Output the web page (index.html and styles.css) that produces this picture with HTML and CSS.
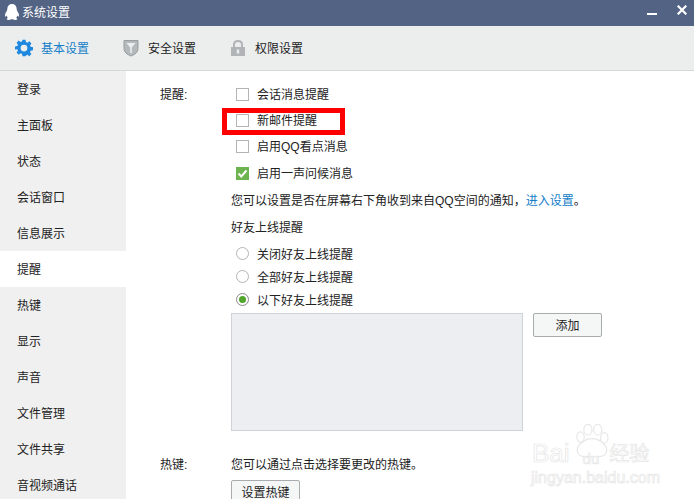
FILE: index.html
```html
<!DOCTYPE html>
<html lang="zh">
<head>
<meta charset="utf-8">
<title>系统设置</title>
<link rel="stylesheet" href="styles.css">
</head>
<body>
<div class="window">
  <header class="titlebar">
    <svg class="qq" width="16" height="18" viewBox="0 0 16 18"><path d="M8 1C5 1 3.400 3 3.300 6C3.300 7 3 7.800 2.500 8.600C1.500 10 .8 11.600 1 13C1.200 14 1.800 13.800 2.600 12.600C2.800 13.600 3.200 14.400 3.900 15C2.900 15.400 2.400 16 2.900 16.600C3.600 17.300 6 17.200 7.300 16.300H8.700C10 17.200 12.400 17.300 13.100 16.600C13.600 16 13.100 15.400 12.100 15C12.800 14.400 13.200 13.600 13.400 12.600C14.200 13.800 14.800 14 15 13C15.200 11.600 14.500 10 13.500 8.600C13 7.800 12.700 7 12.700 6C12.600 3 11 1 8 1Z" fill="#fff"/></svg>
    <span class="title">系统设置</span>
    <span class="min"></span>
    <svg class="close" width="10" height="10" viewBox="0 0 10 10"><path d="M.7 .7L9.300 9.300M9.300 .7L.7 9.300" stroke="#fff" stroke-width="2.200"/></svg>
  </header>
  <nav class="toolbar">
    <a class="tab active">
      <svg width="18" height="18" viewBox="0 0 24 24"><path fill="#1e88e0" fill-rule="evenodd" d="M10 1h4l.6 3.100 1.900.8 2.600-1.800 2.800 2.800-1.800 2.600.8 1.900 3.100.6v4l-3.100.6-.8 1.900 1.800 2.600-2.800 2.800-2.600-1.800-1.900.8L14 23h-4l-.6-3.100-1.900-.8-2.600 1.800-2.800-2.800 1.800-2.600-.8-1.900L0 14v-4l3.100-.6.800-1.900-1.800-2.600 2.800-2.800 2.600 1.800 1.900-.8zM12 7.500a4.500 4.500 0 1 0 0 9 4.500 4.500 0 0 0 0-9z"/></svg>
      基本设置
    </a>
    <a class="tab">
      <svg width="16" height="18" viewBox="0 0 16 18"><path d="M1 1.500H15V9.500C15 13 12 15.600 8 17C4 15.600 1 13 1 9.500Z" fill="#b4b9bb" stroke="#989d9f"/><path d="M3.500 4H12.500L8.800 8.500V14H7.200V8.500Z" fill="#eceeee"/></svg>
      安全设置
    </a>
    <a class="tab">
      <svg width="16" height="18" viewBox="0 0 16 18"><path d="M4 8V5.500C4 3.200 5.700 2 8 2S12 3.200 12 5.500V8" fill="none" stroke="#b0b4b6" stroke-width="2"/><path d="M1 8H15V17H1Z" fill="#b0b4b6"/><path d="M6.800 10.500H9.200V14.500H6.800Z" fill="#eceeee"/></svg>
      权限设置
    </a>
  </nav>
  <div class="body">
    <aside class="sidebar">
      <div class="item">登录</div>
      <div class="item">主面板</div>
      <div class="item">状态</div>
      <div class="item">会话窗口</div>
      <div class="item">信息展示</div>
      <div class="item current">提醒</div>
      <div class="item">热键</div>
      <div class="item">显示</div>
      <div class="item">声音</div>
      <div class="item">文件管理</div>
      <div class="item">文件共享</div>
      <div class="item">音视频通话</div>
    </aside>
    <main class="content">
      <section class="group">
        <div class="label">提醒<span class="latin">:</span></div>
        <div class="fields">
          <div class="check-row"><span class="box"></span>会话消息提醒</div>
          <div class="check-row"><span class="box"></span>新邮件提醒</div>
          <div class="check-row"><span class="box"></span><span>启用<span class="latin">QQ</span>看点消息</span></div>
          <div class="check-row"><span class="box checked"><svg width="13" height="13" viewBox="0 0 13 13"><path d="M2.500 6.500L5.300 9.500L10.500 3.500" fill="none" stroke="#fff" stroke-width="2"/></svg></span>启用一声问候消息</div>
          <p class="line notice">您可以设置是否在屏幕右下角收到来自<span class="latin">QQ</span>空间的通知，<a class="link">进入设置</a>。</p>
          <p class="line sub">好友上线提醒</p>
          <div class="radio-row"><span class="radio"></span>关闭好友上线提醒</div>
          <div class="radio-row"><span class="radio"></span>全部好友上线提醒</div>
          <div class="radio-row"><span class="radio on"></span>以下好友上线提醒</div>
          <div class="friends">
            <div class="list"></div>
            <button class="btn add">添加</button>
          </div>
        </div>
      </section>
      <section class="group hotkey">
        <div class="label">热键<span class="latin">:</span></div>
        <div class="fields">
          <p class="hint">您可以通过点击选择要更改的热键。</p>
          <button class="btn set">设置热键</button>
        </div>
      </section>
      <div class="highlight"></div>
    </main>
  </div>
  <div class="watermark">
    <svg class="paw" width="38" height="36" viewBox="0 0 46 44"><g fill="#fff" stroke="#e8e8e8" stroke-width="1.500"><ellipse cx="9" cy="16" rx="4.500" ry="6.500"/><ellipse cx="18" cy="7" rx="5" ry="6.500"/><ellipse cx="30" cy="7" rx="5" ry="6.500"/><ellipse cx="38" cy="17" rx="4.500" ry="6.500"/><path d="M23 18C32 18 42 26 41 33C40 41 30 40 23 40C15 40 6 41 5 33C4 26 14 18 23 18Z"/></g></svg>
    <div class="wm-top"><span class="wm-bai">Bai</span><span class="wm-du">du</span><span class="wm-jy">经验</span></div>
    <div class="wm-url">jingyan.baidu.com</div>
  </div>
</div>
</body>
</html>
```
FILE: styles.css
```css
html, body {
  margin: 0;
  padding: 0;
  height: 100%;
  overflow: hidden;
  background: #fff;
}
* { box-sizing: border-box; }
.window {
  position: relative;
  width: 694px;
  height: 499px;
  overflow: hidden;
  display: flex;
  flex-direction: column;
  font: 12px/16px "Noto Sans CJK SC", "Liberation Sans", sans-serif;
  color: #222;
}
.latin { font-family: "Liberation Sans", sans-serif; }
.titlebar {
  height: 26px;
  flex: none;
  background: #536384;
  display: flex;
  align-items: center;
  color: #fff;
  padding: 0 7px 2px 4px;
}
.qq { margin-right: 2px; }
.title { flex: 1; }
.min {
  width: 10px;
  height: 2px;
  background: #fff;
  margin: 4px 20px 0 0;
}
.close { margin-top: -4px; }
.toolbar {
  height: 45px;
  flex: none;
  background: #eceeee;
  border-bottom: 1px solid #d6d8d8;
  display: flex;
  align-items: center;
  padding: 0 0 0 15px;
  font-size: 12px;
}
.tab {
  display: flex;
  align-items: center;
  gap: 9px;
  width: 107px;
  color: #222;
}
.tab.active { color: #1580c8; gap: 8px; width: 108px; }
.body {
  flex: 1;
  display: flex;
  min-height: 0;
}
.sidebar {
  width: 126px;
  flex: none;
  background: #f0f0f0;
}
.item {
  height: 36px;
  line-height: 36px;
  padding-left: 17px;
}
.item.current { background: #fff; }
.content {
  position: relative;
  flex: 1;
  padding: 12px 0 0 34px;
}
.group { display: flex; }
.label { width: 71px; flex: none; line-height: 22px; }
.fields { flex: 1; }
.check-row, .radio-row {
  display: flex;
  align-items: center;
  padding-left: 5px;
  gap: 8px;
}
.check-row { height: 26.300px; margin-top: -2px; margin-bottom: 2px; }
.radio-row { height: 23px; }
.box {
  width: 13px;
  height: 13px;
  flex: none;
  border: 1px solid #b4b4b4;
  background: #fff;
}
.box.checked {
  border: 0;
  background: #6db34f;
  display: block;
}
.box.checked svg { display: block; }
.line { margin: 0; height: 27px; line-height: 27px; }
.notice { margin-top: -2px; }
.sub { margin-bottom: 2px; }
.link { color: #1580c8; }
.radio {
  width: 13px;
  height: 13px;
  flex: none;
  border: 1px solid #b4b4b4;
  border-radius: 50%;
  background: #fff;
  display: flex;
  align-items: center;
  justify-content: center;
}
.radio.on { border-color: #8a8a8a; }
.radio.on::after {
  content: "";
  width: 7px;
  height: 7px;
  border-radius: 50%;
  background: #52a52c;
}
.friends {
  display: flex;
  align-items: flex-start;
  gap: 10px;
  margin-top: 2px;
}
.list {
  width: 292px;
  height: 118px;
  background: #edeef2;
  border: 1px solid #cfd2d6;
}
.btn {
  font: inherit;
  color: #222;
  padding: 0;
  background: #f5f6f6;
  border: 1px solid #a8acae;
  border-radius: 2px;
}
.add { width: 69px; height: 24px; }
.hotkey { margin-top: 22px; }
.hint { margin: 0; height: 22px; line-height: 22px; }
.set { width: 69px; height: 24px; display: block; margin-top: 5px; }
.highlight {
  position: absolute;
  left: 96px;
  top: 37px;
  width: 123px;
  height: 27px;
  border: 5px solid #f00;
}
.watermark {
  position: absolute;
  left: 530px;
  top: 424px;
  width: 135px;
  height: 66px;
  color: #fff;
  -webkit-text-stroke: .7px #e6e6e6;
  font-family: "Liberation Sans", sans-serif;
  pointer-events: none;
}
.paw {
  position: absolute;
  left: 43px;
  top: 0;
}
.wm-top {
  position: absolute;
  top: 14px;
  left: 2px;
  display: flex;
  white-space: nowrap;
  font-size: 26px;
  line-height: 30px;
}
.wm-du { font-size: 15px; line-height: 20px; margin: 11px 10px 0 13px; }
.wm-jy { font: 20px/30px "Noto Sans CJK SC", sans-serif; }
.wm-url {
  position: absolute;
  top: 45px;
  left: 1px;
  font-size: 16px;
  line-height: 18px;
  white-space: nowrap;
}
```
